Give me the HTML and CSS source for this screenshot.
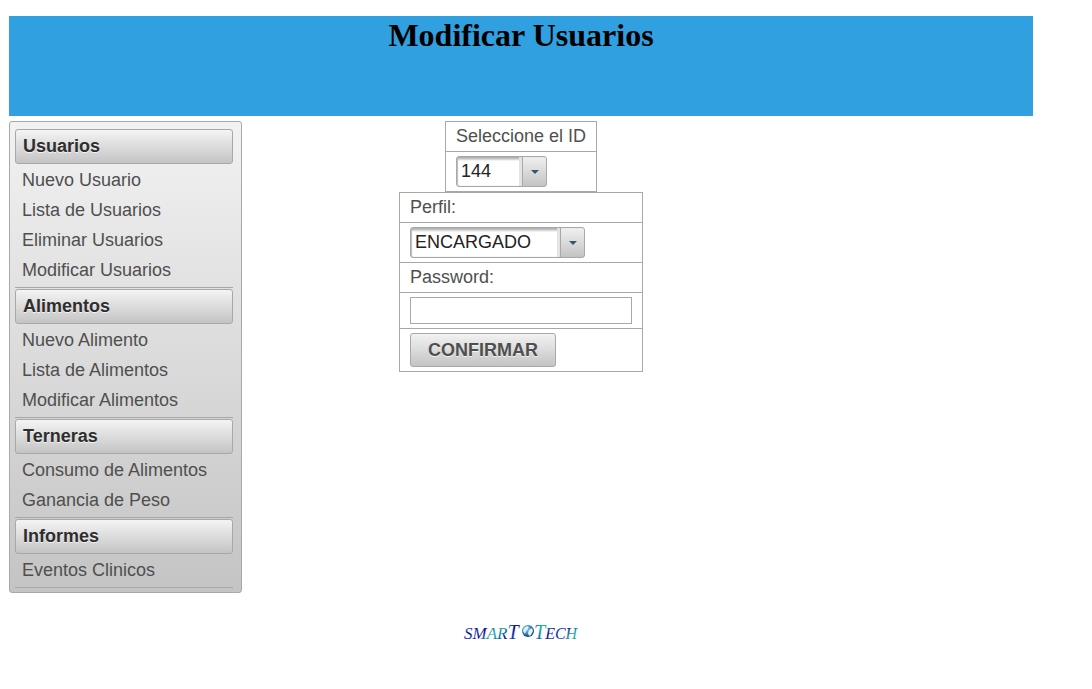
FILE: index.html
```html
<!DOCTYPE html>
<html lang="es">
<head>
<meta charset="utf-8">
<title>Modificar Usuarios</title>
<link rel="stylesheet" href="styles.css">
</head>
<body>
<div class="page">
  <header class="banner"><h1 class="title">Modificar Usuarios</h1></header>
  <div class="content">
    <nav class="menu" aria-label="Menú">
      <section class="group">
        <h3 class="group-title">Usuarios</h3>
        <ul class="links">
          <li><a class="link" href="#">Nuevo Usuario</a></li>
          <li><a class="link" href="#">Lista de Usuarios</a></li>
          <li><a class="link" href="#">Eliminar Usuarios</a></li>
          <li><a class="link" href="#">Modificar Usuarios</a></li>
        </ul>
      </section>
      <section class="group">
        <h3 class="group-title">Alimentos</h3>
        <ul class="links">
          <li><a class="link" href="#">Nuevo Alimento</a></li>
          <li><a class="link" href="#">Lista de Alimentos</a></li>
          <li><a class="link" href="#">Modificar Alimentos</a></li>
        </ul>
      </section>
      <section class="group">
        <h3 class="group-title">Terneras</h3>
        <ul class="links">
          <li><a class="link" href="#">Consumo de Alimentos</a></li>
          <li><a class="link" href="#">Ganancia de Peso</a></li>
        </ul>
      </section>
      <section class="group">
        <h3 class="group-title">Informes</h3>
        <ul class="links">
          <li><a class="link" href="#">Eventos Clinicos</a></li>
        </ul>
      </section>
    </nav>
    <form class="form">
      <table class="panel">
        <tr><td class="cell"><label for="id">Seleccione el ID</label></td></tr>
        <tr><td class="cell"><span class="picker"><select class="select select-short" id="id"><option>144</option></select></span></td></tr>
      </table>
      <table class="panel">
        <tr><td class="cell"><label for="perfil">Perfil:</label></td></tr>
        <tr><td class="cell"><span class="picker"><select class="select select-long" id="perfil"><option>ENCARGADO</option></select></span></td></tr>
        <tr><td class="cell"><label for="password">Password:</label></td></tr>
        <tr><td class="cell"><input class="input" id="password" type="password"></td></tr>
        <tr><td class="cell"><button class="button" type="button">CONFIRMAR</button></td></tr>
      </table>
    </form>
  </div>
  <footer class="footer">
    <svg class="logo" width="116" height="22" viewBox="0 0 116 22" role="img" aria-label="SmarT Tech">
      <defs>
        <linearGradient id="ink" gradientUnits="userSpaceOnUse" x1="0" y1="4" x2="11" y2="14" spreadMethod="reflect">
          <stop offset="0" stop-color="#22b8a8"/><stop offset=".35" stop-color="#1679b0"/><stop offset=".65" stop-color="#0d0d8c"/><stop offset="1" stop-color="#1440c0"/>
        </linearGradient>
        <radialGradient id="sea" cx=".4" cy=".35" r=".7">
          <stop offset="0" stop-color="#8fd0ee"/><stop offset=".6" stop-color="#2d7bb8"/><stop offset="1" stop-color="#0e2a5c"/>
        </radialGradient>
      </defs>
      <text class="logo-text" x="1" y="18" fill="url(#ink)">SMAR<tspan class="logo-big">T</tspan></text>
      <circle cx="65" cy="10" r="6" fill="url(#sea)"/>
      <path d="M61 7l3-2 2 1-2 3-1 1-1 3-2-3zM66 9l3-2 1 3-2 4-2 1-1-3z" fill="#e3f2f5"/>
      <text class="logo-text" x="71" y="18" fill="url(#ink)"><tspan class="logo-big">T</tspan><tspan class="logo-small">ECH</tspan></text>
    </svg>
  </footer>
</div>
</body>
</html>
```
FILE: styles.css
```css
body {
  margin: 16px 59px 0 9px;
  background: #fff;
  color: #4f4f4f;
  font: 18px/22px "Liberation Sans", Arial, sans-serif;
}
.banner {
  min-height: 100px;
  background: #30a0e0;
}
.title {
  margin: 0;
  color: #000;
  font: bold 32px/38px "Liberation Serif", "Times New Roman", serif;
  text-align: center;
}
.content {
  display: grid;
  grid-template-columns: 1fr auto 1fr;
  align-items: start;
  margin-top: 5px;
}
.menu {
  box-sizing: border-box;
  width: 233px;
  padding: 7px 8px 4px 5px;
  border: 1px solid #a8a8a8;
  border-radius: 3px;
  background: linear-gradient(#f2f2f2, #c4c4c4);
}
.group {
  padding-bottom: 2px;
  border-bottom: 1px solid #a8a8a8;
}
.group + .group {
  margin-top: 1px;
}
.group-title {
  box-sizing: border-box;
  height: 35px;
  margin: 0 0 1px;
  padding: 0 7px;
  border: 1px solid #a8a8a8;
  border-radius: 3px;
  background: linear-gradient(#f4f4f4, #c4c4c4);
  color: #2e2e2e;
  font-size: 18px;
  line-height: 33px;
  text-shadow: 0 1px 0 rgba(255, 255, 255, .7);
}
.links {
  margin: 0;
  padding: 0;
  list-style: none;
}
.link {
  display: block;
  padding: 0 7px;
  color: #4f4f4f;
  line-height: 30px;
  text-decoration: none;
}
.form {
  display: flex;
  flex-direction: column;
  align-items: center;
}
.panel {
  border-collapse: collapse;
}
.cell {
  padding: 4px 10px;
  border: 1px solid #a8a8a8;
  line-height: 21px;
}
.picker {
  position: relative;
  display: block;
  width: fit-content;
}
.picker::after {
  content: "";
  position: absolute;
  top: 14px;
  right: 8px;
  border: 4px solid transparent;
  border-top-color: #2f5a70;
  border-bottom: 0;
  pointer-events: none;
}
.select {
  display: block;
  height: 31px;
  padding: 0 26px 0 4px;
  border: 1px solid #a8a8a8;
  border-radius: 3px;
  appearance: none;
  background:
    linear-gradient(#a8a8a8, #a8a8a8) right 23px top / 1px 100% no-repeat,
    linear-gradient(#a8a8a8, #ccc 2px, #fff 4px) left top / calc(100% - 27px) 100% no-repeat,
    linear-gradient(#f0f0f0, #c4c4c4) right top / 23px 100% no-repeat,
    #e4e4e4;
  box-shadow: inset 1px 0 1px #bbb;
  color: #222;
  font: inherit;
}
.select-short {
  width: 91px;
}
.select-long {
  width: 175px;
}
.input {
  display: block;
  box-sizing: border-box;
  width: 222px;
  height: 27px;
  padding: 0 4px;
  border: 1px solid #a8a8a8;
  font: inherit;
}
.button {
  display: block;
  height: 34px;
  padding: 0 17px;
  border: 1px solid #a8a8a8;
  border-radius: 3px;
  background: linear-gradient(#f2f2f2, #c4c4c4);
  color: #4f4f4f;
  font: inherit;
  font-weight: bold;
  text-shadow: 0 1px 0 rgba(255, 255, 255, .7);
}
.footer {
  display: flex;
  justify-content: center;
  margin-top: 28px;
}
.logo-text {
  font: italic 17px "Liberation Serif", "Times New Roman", serif;
}
.logo-big {
  font-size: 20px;
}
.logo-small {
  font-size: 16px;
}
```
